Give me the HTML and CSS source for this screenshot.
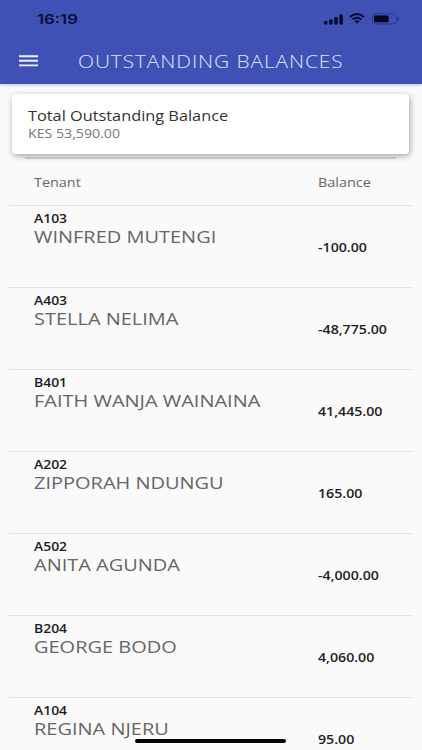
FILE: index.html
```html
<!DOCTYPE html>
<html lang="en">
<head>
    <meta charset="UTF-8">
    <meta name="viewport" content="width=device-width, initial-scale=1.0">
    <title>Outstanding Balances</title>
    <link rel="stylesheet" href="styles.css">
</head>
<body>
    <header class="app-bar">
        <div class="status-bar">
            <span class="clock">16:19</span>
            <div class="status-icons">
                <svg class="signal" width="19" height="11" viewBox="0 0 19 11">
                    <rect x="0" y="7" width="3.4" height="3.6" rx="1"/>
                    <rect x="5.2" y="5.3" width="3.4" height="5.3" rx="1"/>
                    <rect x="10.3" y="3" width="3.4" height="7.6" rx="1"/>
                    <rect x="15.4" y="0.4" width="3.4" height="10.2" rx="1"/>
                </svg>
                <svg class="wifi" width="16" height="11" viewBox="0 0 16 11">
                    <path d="M0.9 4.1Q8 -1.9 15.1 4.1M3.5 6.6Q8 2.8 12.5 6.6" fill="none" stroke="#0a0d33" stroke-width="1.9"/>
                    <path d="M5.4 8.3Q8 6.3 10.6 8.3L8 10.6Z"/>
                </svg>
                <svg class="battery" width="28" height="12" viewBox="0 0 28 12">
                    <rect x="0.6" y="0.9" width="23.6" height="10" rx="2.6" fill="none" stroke="#2b3782"/>
                    <rect x="2.2" y="2.5" width="14.4" height="6.8" rx="1.2"/>
                    <path d="M25.4 4Q27.3 4.6 27.3 5.9T25.4 7.8Z" fill="#2b3782"/>
                </svg>
            </div>
        </div>
        <div class="toolbar">
            <svg class="menu" width="19" height="12" viewBox="0 0 19 12">
                <path d="M0 1.2H19M0 5.8H19M0 10.4H19" stroke="#eef1ff" stroke-width="1.9"/>
            </svg>
            <h1 class="title">OUTSTANDING BALANCES</h1>
        </div>
    </header>

    <main>
        <section class="card">
            <div class="card-title">Total Outstanding Balance</div>
            <div class="card-amount">KES 53,590.00</div>
        </section>
        <div class="divider"></div>

        <div class="list">
            <div class="row head">
                <span class="label">Tenant</span>
                <span class="label">Balance</span>
            </div>
            <div class="row">
                <div class="tenant"><div class="unit">A103</div><div class="name">WINFRED MUTENGI</div></div>
                <div class="balance">-100.00</div>
            </div>
            <div class="row">
                <div class="tenant"><div class="unit">A403</div><div class="name">STELLA NELIMA</div></div>
                <div class="balance">-48,775.00</div>
            </div>
            <div class="row">
                <div class="tenant"><div class="unit">B401</div><div class="name">FAITH WANJA WAINAINA</div></div>
                <div class="balance">41,445.00</div>
            </div>
            <div class="row">
                <div class="tenant"><div class="unit">A202</div><div class="name">ZIPPORAH NDUNGU</div></div>
                <div class="balance">165.00</div>
            </div>
            <div class="row">
                <div class="tenant"><div class="unit">A502</div><div class="name">ANITA AGUNDA</div></div>
                <div class="balance">-4,000.00</div>
            </div>
            <div class="row">
                <div class="tenant"><div class="unit">B204</div><div class="name">GEORGE BODO</div></div>
                <div class="balance">4,060.00</div>
            </div>
            <div class="row">
                <div class="tenant"><div class="unit">A104</div><div class="name">REGINA NJERU</div></div>
                <div class="balance">95.00</div>
            </div>
        </div>
    </main>
    <div class="home-indicator"></div>
</body>
</html>
```
FILE: styles.css
```css
* {
    box-sizing: border-box;
}
body {
    margin: 0;
    height: 750px;
    overflow: hidden;
    background-color: #fafafa;
    color: #222;
    font-family: "Open Sans", "Noto Sans", sans-serif;
}
/* wide lettering */
.clock, .title, .card-title, .card-amount, .label, .unit, .name, .balance {
    width: max-content;
    white-space: nowrap;
    transform: scaleX(1.2);
    transform-origin: left center;
}
.app-bar {
    height: 84px;
    background-color: #3f51b5;
    box-shadow: 0 1px 3px rgba(63, 81, 181, 0.35);
}
.status-bar {
    display: flex;
    justify-content: space-between;
    height: 38px;
    padding: 9px 22px 0 37px;
}
.clock {
    color: #0a0d33;
    font-family: Inter, sans-serif;
    font-size: 13.5px;
    font-weight: 600;
    line-height: 20px;
    transform: scaleX(1.24);
}
.status-icons {
    display: flex;
    padding-top: 4px;
    fill: #05071f;
}
.signal {
    margin: 1px 6px 0 0;
}
.wifi {
    margin-right: 7px;
}
.toolbar {
    display: flex;
    align-items: center;
    height: 46px;
    padding-left: 19px;
}
.menu {
    margin-bottom: 1px;
}
.title {
    margin: 0 0 1px 40px;
    color: #dfe5ff;
    font-size: 17.5px;
    font-weight: 300;
    line-height: 24px;
    letter-spacing: 0.75px;
    transform: scaleX(1.195);
}
.card {
    height: 60px;
    margin: 10px 13px 0 12px;
    padding: 12px 16px;
    background-color: #fff;
    border-radius: 4px;
    box-shadow: 1px 2px 6px rgba(0, 0, 0, 0.35);
}
.card-title {
    color: #333;
    font-size: 14px;
    line-height: 20px;
    transform: scaleX(1.165);
}
.card-amount {
    color: #777;
    font-size: 12px;
    line-height: 15px;
    transform: scaleX(1.18);
}
.divider {
    height: 2px;
    margin: 3px 26px 0 25px;
    background-color: #c2c2c2;
}
.list {
    margin: 0 10px 0 9px;
}
.row {
    display: grid;
    grid-template-columns: 284px 1fr;
    height: 82px;
    padding-left: 25px;
    border-top: 1px solid #e2e2e2;
}
.row.head {
    align-items: center;
    height: 46px;
    border-top: none;
}
.label {
    color: #666;
    font-size: 12px;
    line-height: 16px;
    padding-top: 2px;
}
.tenant {
    padding-top: 5px;
}
.unit {
    color: #1c1c1c;
    font-size: 12px;
    font-weight: 600;
    line-height: 15px;
    transform: scaleX(1.16);
}
.name {
    color: #666;
    font-size: 17px;
    line-height: 21px;
    transform: scaleX(1.175);
}
.balance {
    color: #222;
    font-size: 12px;
    font-weight: 600;
    line-height: 16px;
    padding-top: 34px;
    transform: scaleX(1.18);
}
.home-indicator {
    position: absolute;
    left: 135px;
    bottom: 7px;
    width: 151px;
    height: 4px;
    border-radius: 2px;
    background-color: #000;
}
```
